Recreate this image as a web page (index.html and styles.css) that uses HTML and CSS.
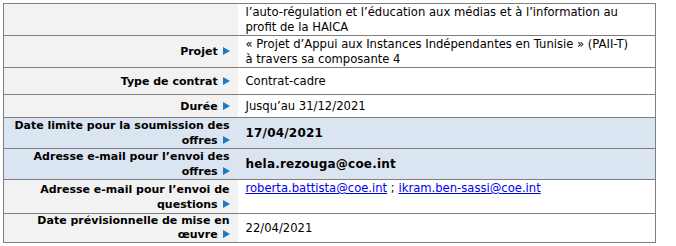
FILE: index.html
```html
<!DOCTYPE html>
<html lang="fr">
<head>
<meta charset="utf-8">
<link rel="stylesheet" href="styles.css">
</head>
<body>
<div class="wrap">
<table class="info">
  <colgroup><col class="c-label"><col class="c-value"></colgroup>
  <tr class="r1">
    <th class="label"></th>
    <td class="value">l’auto-régulation et l’éducation aux médias et à l’information au<br>profit de la HAICA</td>
  </tr>
  <tr class="r2">
    <th class="label">Projet <span class="arr"><svg width="7" height="8" viewBox="0 0 7 8"><path d="M0 0L7 4L0 8Z"/></svg></span></th>
    <td class="value">« Projet d’Appui aux Instances Indépendantes en Tunisie » (PAII-T)<br>à travers sa composante 4</td>
  </tr>
  <tr class="r3">
    <th class="label">Type de contrat <span class="arr"><svg width="7" height="8" viewBox="0 0 7 8"><path d="M0 0L7 4L0 8Z"/></svg></span></th>
    <td class="value">Contrat-cadre</td>
  </tr>
  <tr class="r4">
    <th class="label">Durée <span class="arr"><svg width="7" height="8" viewBox="0 0 7 8"><path d="M0 0L7 4L0 8Z"/></svg></span></th>
    <td class="value">Jusqu’au 31/12/2021</td>
  </tr>
  <tr class="r5 hl">
    <th class="label">Date limite pour la soumission des<br>offres <span class="arr"><svg width="7" height="8" viewBox="0 0 7 8"><path d="M0 0L7 4L0 8Z"/></svg></span></th>
    <td class="value big">17/04/2021</td>
  </tr>
  <tr class="r6 hl">
    <th class="label">Adresse e-mail pour l’envoi des<br>offres <span class="arr"><svg width="7" height="8" viewBox="0 0 7 8"><path d="M0 0L7 4L0 8Z"/></svg></span></th>
    <td class="value big">hela.rezouga@coe.int</td>
  </tr>
  <tr class="r7">
    <th class="label">Adresse e-mail pour l’envoi de<br>questions <span class="arr"><svg width="7" height="8" viewBox="0 0 7 8"><path d="M0 0L7 4L0 8Z"/></svg></span></th>
    <td class="value top"><a href="#">roberta.battista@coe.int</a> ; <a href="#">ikram.ben-sassi@coe.int</a></td>
  </tr>
  <tr class="r8">
    <th class="label tight">Date prévisionnelle de mise en<br>œuvre <span class="arr"><svg width="7" height="8" viewBox="0 0 7 8"><path d="M0 0L7 4L0 8Z"/></svg></span></th>
    <td class="value">22/04/2021</td>
  </tr>
</table>
</div>
</body>
</html>
```

FILE: styles.css
```css
html, body {
  margin: 0;
  padding: 0;
  background: #ffffff;
}
.wrap {
  padding: 3px 0 0 3px;
}
.info {
  width: 653px;
  table-layout: fixed;
  border-collapse: collapse;
  border: 1px solid #7f7f7f;
  font-family: "DejaVu Sans", Verdana, sans-serif;
  font-size: 11.6px;
  line-height: 15px;
  color: #000000;
}
.c-label { width: 234px; }
.info tr { border-bottom: 1px solid #7f7f7f; }
.label {
  background: #f2f2f2;
  text-align: right;
  font-weight: bold;
  font-size: 11px;
  padding: 0 8px 0 2px;
  vertical-align: middle;
  white-space: nowrap;
}
.label.tight { line-height: 14px; }
.value {
  background: #ffffff;
  text-align: left;
  padding: 0 4px 0 8px;
  vertical-align: middle;
  white-space: nowrap;
}
.value.top { vertical-align: top; padding-top: 1px; }
.value.big { font-weight: bold; font-size: 12px; letter-spacing: 0.2px; }
.hl .label, .hl .value { background: #dbe5f1; }
.arr { margin-left: 1px; }
.arr svg { fill: #1b7ac8; vertical-align: 0; }
.value a { color: #0000ee; text-decoration: underline; }
.r1 { height: 32px; }
.r1 .value { vertical-align: top; padding-top: 1px; }
.r2 { height: 32px; }
.r3 { height: 27px; }
.r4 { height: 23px; }
.r5 { height: 31px; }
.r6 { height: 29px; }
.r7 { height: 34px; }
.r8 { height: 28px; }
```
